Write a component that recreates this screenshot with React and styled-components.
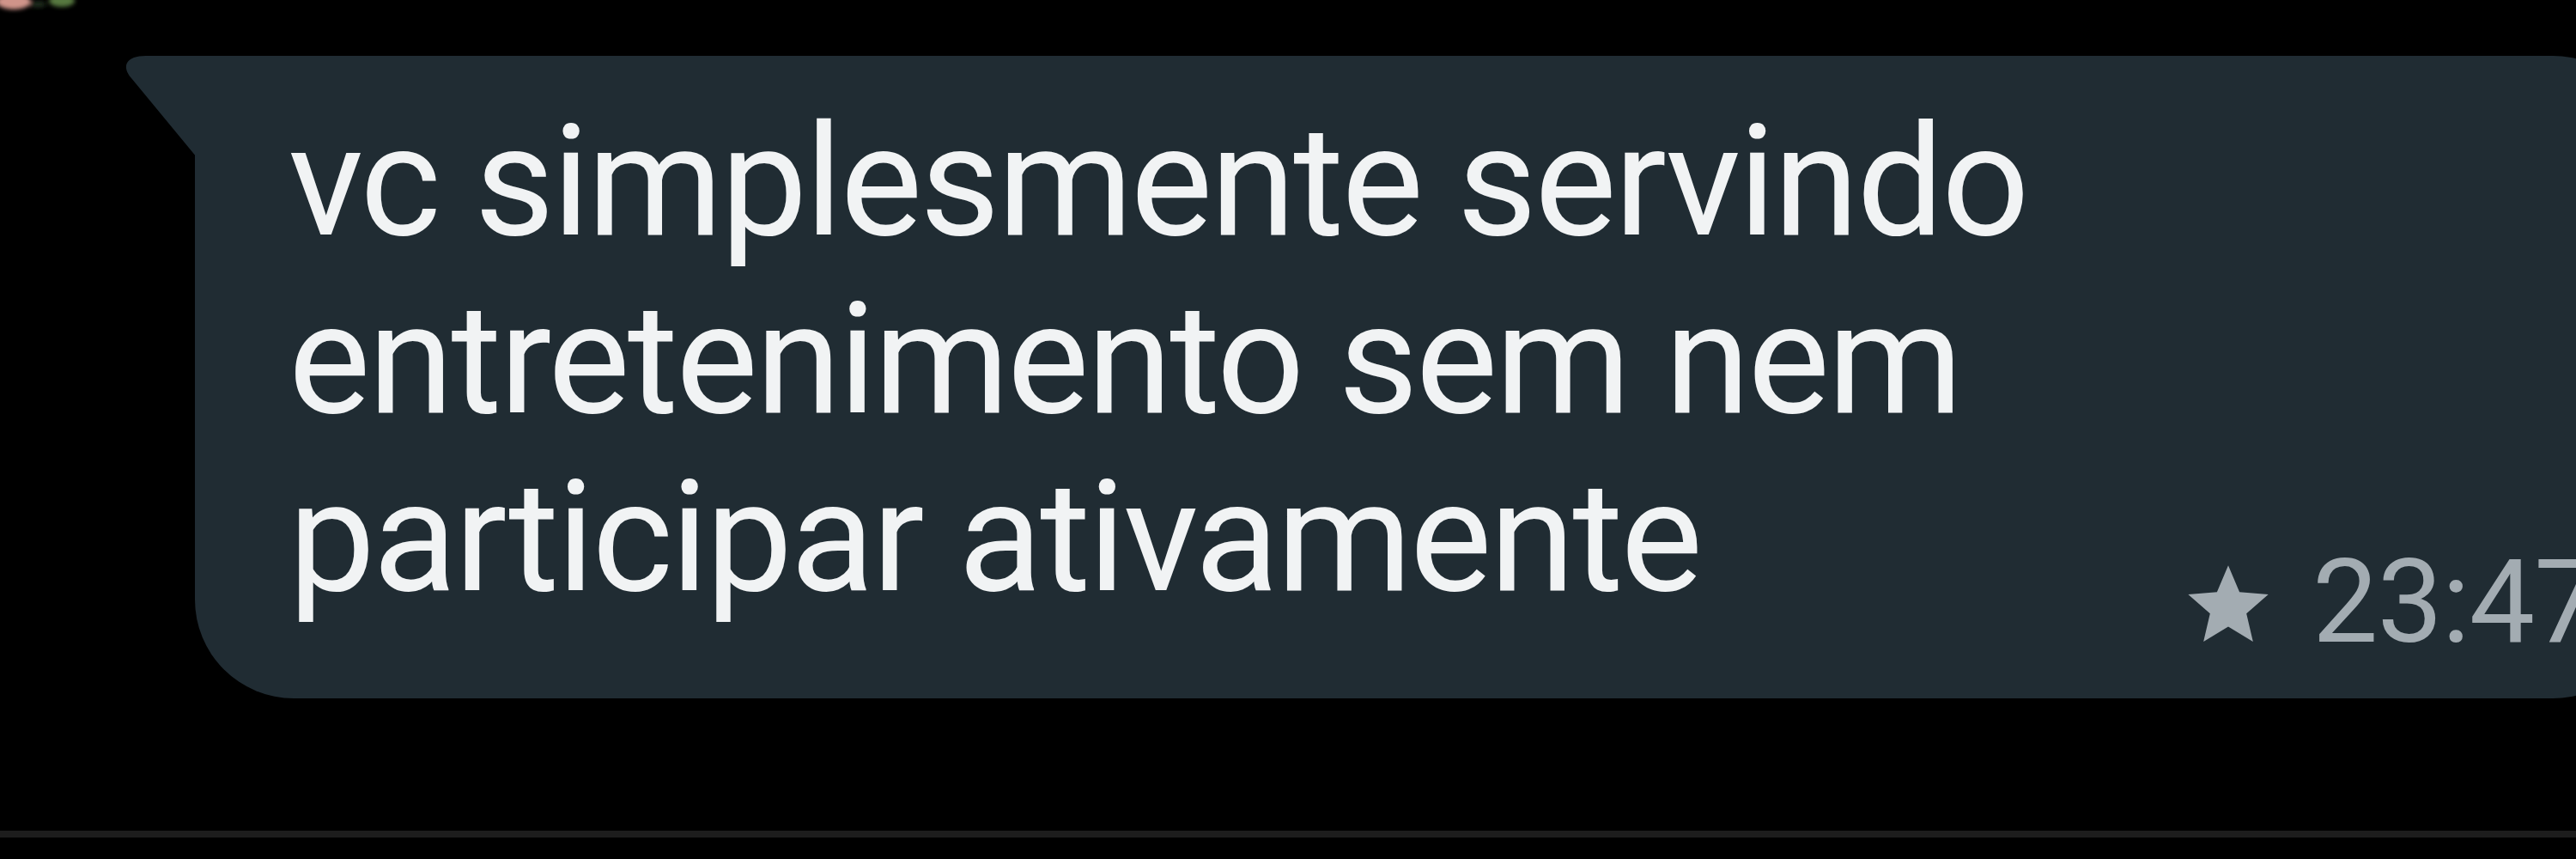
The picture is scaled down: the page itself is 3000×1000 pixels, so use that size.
import React from 'react'
import styled, { createGlobalStyle } from 'styled-components'

const GlobalStyle = createGlobalStyle`
  html, body {
    margin: 0;
    padding: 0;
    background: #000;
    overflow: hidden;
  }
  body {
    font-family: Roboto, "Noto Sans", "Liberation Sans", sans-serif;
  }
`

const Page = styled.div`
  height: 1000px;
  display: flex;
  flex-direction: column;
  background: #000;
`

const AvatarPeek = styled.svg`
  display: block;
  width: 110px;
  height: 16px;
  flex: none;
`

const Row = styled.div`
  display: flex;
  padding-left: 227px;
  margin-top: 49px;
`

const Bubble = styled.div`
  position: relative;
  flex: none;
  display: flex;
  padding: 43px 56px 44px 109px;
  background: #202c33;
  border-radius: 0 110px 110px 115px;
`

const Tail = styled.svg`
  position: absolute;
  left: -86px;
  top: 0;
  width: 88px;
  height: 118px;
`

const Text = styled.div`
  width: 2110px;
  margin-bottom: 40px;
  color: #f1f3f4;
  font-size: 180px;
  line-height: 207px;
  letter-spacing: -2.7px;
`

const Meta = styled.div`
  align-self: flex-end;
  display: flex;
  align-items: flex-end;
  margin-left: 93px;
  color: #a3acb2;
`

const Star = styled.svg`
  width: 112px;
  height: 112px;
  margin-bottom: 8px;
  fill: #a3acb2;
`

const Time = styled.span`
  margin-left: 42px;
  font-size: 136px;
  line-height: 136px;
  letter-spacing: -1px;
`

const Divider = styled.div`
  margin-top: auto;
  margin-bottom: 25px;
  height: 8px;
  background: #1d1d1d;
`

export default function App() {
  return (
    <>
      <GlobalStyle />
      <Page>
        <AvatarPeek viewBox="0 0 110 16">
          <defs>
            <filter id="soft" x="-50%" y="-50%" width="200%" height="200%">
              <feGaussianBlur stdDeviation="2.5" />
            </filter>
          </defs>
          <g filter="url(#soft)">
            <ellipse cx="16" cy="2" rx="20" ry="9" fill="#d0948a" />
            <ellipse cx="72" cy="1" rx="15" ry="7" fill="#56783f" />
            <ellipse cx="44" cy="5" rx="10" ry="4" fill="#1d2a1a" />
          </g>
        </AvatarPeek>
        <Row>
          <Bubble>
            <Tail viewBox="-86 0 88 118">
              <path d="M2 0 H-57 C-80 0 -86 12 -74 26 L2 118 Z" fill="#202c33" />
            </Tail>
            <Text>vc simplesmente servindo entretenimento sem nem participar ativamente</Text>
            <Meta>
              <Star viewBox="0 0 24 24">
                <path d="M12 17.27L18.18 21l-1.64-7.03L22 9.24l-7.19-.61L12 2 9.19 8.63 2 9.24l5.46 4.73L5.82 21z" />
              </Star>
              <Time>23:47</Time>
            </Meta>
          </Bubble>
        </Row>
        <Divider />
      </Page>
    </>
  )
}
